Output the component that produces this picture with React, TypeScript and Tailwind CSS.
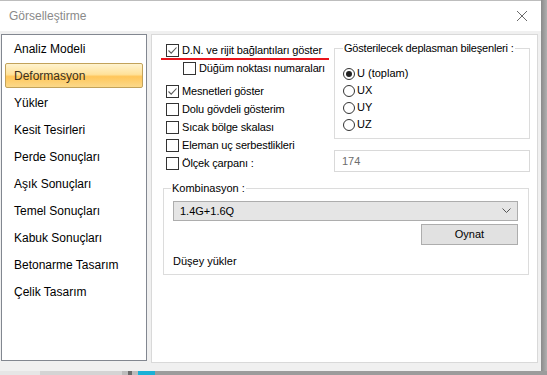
import React from "react";

const font = { fontFamily: '"Liberation Sans", Arial, sans-serif' };

const listItems = [
  "Analiz Modeli",
  "Deformasyon",
  "Yükler",
  "Kesit Tesirleri",
  "Perde Sonuçları",
  "Aşık Sonuçları",
  "Temel Sonuçları",
  "Kabuk Sonuçları",
  "Betonarme Tasarım",
  "Çelik Tasarım",
];

function Check({ checked }: { checked?: boolean }) {
  return (
    <span className="flex h-[13px] w-[13px] shrink-0 items-center justify-center border border-[#333] bg-white">
      {checked && (
        <svg width="11" height="11" viewBox="0 0 11 11">
          <path d="M1.5 5.5 L4.2 8.2 L9.5 2.5" fill="none" stroke="#5a5a5a" strokeWidth="1.1" />
        </svg>
      )}
    </span>
  );
}

function CheckRow({ label, checked, className = "" }: { label: string; checked?: boolean; className?: string }) {
  return (
    <div className={`flex h-[18px] items-center gap-[3px] ${className}`}>
      <Check checked={checked} />
      <span className="whitespace-nowrap text-[11px] tracking-[-0.15px] text-black">{label}</span>
    </div>
  );
}

function Radio({ label, selected }: { label: string; selected?: boolean }) {
  return (
    <div className="flex h-[17px] items-center gap-[2px]">
      <span className="flex h-[12px] w-[12px] items-center justify-center rounded-full border border-[#333] bg-white">
        {selected && <span className="h-[6px] w-[6px] rounded-full bg-[#222]" />}
      </span>
      <span className="text-[11px] text-black">{label}</span>
    </div>
  );
}

export default function App() {
  return (
    <div className="flex h-[375px] w-[547px] flex-col overflow-hidden bg-[#9f9f9f]" style={font}>
      <div className="flex h-[371px]">
        <div className="flex w-[541px] flex-col border-t border-[#bdbdbd]">
          {/* title bar */}
          <div className="flex h-[30px] items-center justify-between bg-white pl-[9px] pr-[10px]">
            <span className="text-[12px] text-[#8a8a8a]">Görselleştirme</span>
            <svg width="12" height="12" viewBox="0 0 12 12" className="mr-[3px]">
              <path d="M1 1 L11 11 M11 1 L1 11" stroke="#6a6a6a" strokeWidth="1" />
            </svg>
          </div>

          <div className="flex flex-1 gap-[4px] bg-[#f0f0f0] pl-[1px] pt-[3px]">
            {/* left list */}
            <div className="flex h-[327px] w-[146px] flex-col border border-[#828790] bg-white">
              {listItems.map((item) =>
                item === "Deformasyon" ? (
                  <div key={item} className="flex h-[27px] items-center">
                    <div className="mx-[3px] flex h-[25px] flex-1 items-center rounded-[2px] border border-[#c2a25a] bg-[linear-gradient(to_bottom,#fff3cf_0%,#ffe29a_45%,#ffc65a_55%,#fbd98a_100%)] pl-[8px]">
                      <span className="text-[12px] text-[#3a3020]">{item}</span>
                    </div>
                  </div>
                ) : (
                  <div key={item} className="flex h-[27px] items-center pl-[12px]">
                    <span className="text-[12px] text-black">{item}</span>
                  </div>
                )
              )}
            </div>

            {/* right panel */}
            <div className="flex h-[329px] w-[387px] flex-col border border-[#d9d9d9] bg-white">
              <div className="ml-[14px] mt-[6px] flex">
                <div className="flex w-[168px] flex-col">
                  <div className="relative">
                    <CheckRow label="D.N. ve rijit bağlantıları göster" checked />
                    <div className="absolute left-[-5px] top-[17px] h-[2px] w-[168px] bg-[#e8141c]" />
                  </div>
                  <CheckRow label="Düğüm noktası numaraları" className="ml-[17px]" />
                  <div className="h-[5px]" />
                  <CheckRow label="Mesnetleri göster" checked />
                  <CheckRow label="Dolu gövdeli gösterim" />
                  <CheckRow label="Sıcak bölge skalası" />
                  <CheckRow label="Eleman uç serbestlikleri" />
                  <CheckRow label="Ölçek çarpanı :" />
                </div>
                <div className="flex w-[196px] flex-col">
                  <fieldset className="h-[98px] border border-[#dcdcdc] px-[8px]">
                    <legend className="whitespace-nowrap px-[1px] text-[11px] leading-[14px] tracking-[-0.2px] text-black">
                      Gösterilecek deplasman bileşenleri :
                    </legend>
                    <div className="mt-[10px] flex flex-col">
                      <Radio label="U (toplam)" selected />
                      <Radio label="UX" />
                      <Radio label="UY" />
                      <Radio label="UZ" />
                    </div>
                  </fieldset>
                  <div className="mt-[11px] flex h-[22px] items-center border border-[#d9d9d9] bg-white pl-[7px]">
                    <span className="text-[11px] text-[#6d6d6d]">174</span>
                  </div>
                </div>
              </div>

              <fieldset className="ml-[11px] mt-[9px] w-[366px] border border-[#dcdcdc] pb-[6px] pl-[9px] pr-[10px]">
                <legend className="ml-[-2px] px-[1px] text-[11px] leading-[14px] text-black">Kombinasyon :</legend>
                <div className="mt-[6px] flex h-[20px] items-center justify-between border border-[#adadad] bg-[#e5e5e5] pl-[6px] pr-[6px]">
                  <span className="text-[11px] text-black">1.4G+1.6Q</span>
                  <svg width="9" height="6" viewBox="0 0 9 6">
                    <path d="M0.5 0.5 L4.5 4.5 L8.5 0.5" fill="none" stroke="#555" strokeWidth="1" />
                  </svg>
                </div>
                <div className="mt-[3px] flex justify-end">
                  <div className="flex h-[21px] w-[97px] items-center justify-center border border-[#adadad] bg-[#e1e1e1]">
                    <span className="text-[11px] text-black">Oynat</span>
                  </div>
                </div>
                <div className="mt-[9px] flex h-[14px] items-center">
                  <span className="text-[11px] text-black">Düşey yükler</span>
                </div>
              </fieldset>
            </div>
          </div>
        </div>
        <div className="w-[6px] bg-[linear-gradient(to_right,#8a8a8a,#b0b0b0)]" />
      </div>

      {/* background app peeking below */}
      <div className="flex h-[4px]">
        <div className="w-[40px] bg-[#e6e6e6]" />
        <div className="w-[82px] bg-[#d4d4d4]" />
        <div className="w-[6px] bg-[#bcbcbc]" />
        <div className="w-[4px] bg-[#6a6a6a]" />
        <div className="w-[6px] bg-[#bcbcbc]" />
        <div className="w-[17px] bg-[#1ab0d6]" />
        <div className="flex-1 bg-[#9c9c9c]" />
      </div>
    </div>
  );
}
